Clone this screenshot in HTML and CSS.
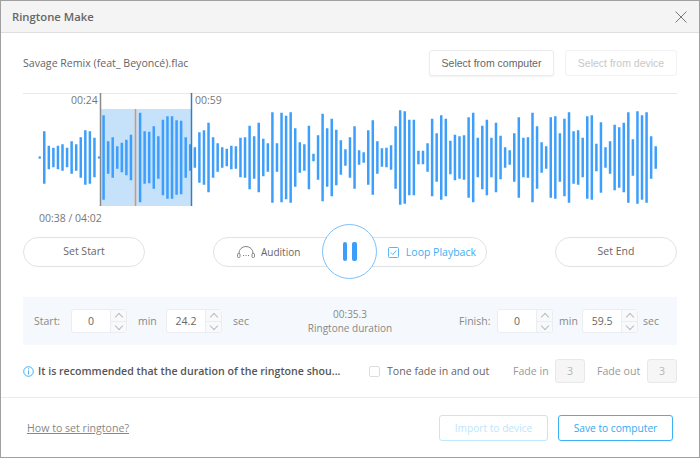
FILE: index.html
```html
<!DOCTYPE html>
<html lang="en">
<head>
<meta charset="utf-8">
<title>Ringtone Make</title>
<link rel="stylesheet" href="styles.css">
</head>
<body>
<div class="dialog">
  <header class="head">
    <span class="title">Ringtone Make</span>
    <svg class="close" width="12" height="12" viewBox="0 0 12 12"><path d="M.5.5l11 11M11.5.5l-11 11"/></svg>
  </header>
  <main class="main">
    <div class="file-row">
      <span class="file-name">Savage Remix (feat_ Beyoncé).flac</span>
      <div class="file-btns">
        <button class="btn">Select from computer</button>
        <button class="btn btn-off">Select from device</button>
      </div>
    </div>
    <section class="wave">
      <svg class="wave-svg" width="654" height="133" viewBox="23 92 654 133">
        <rect class="sel" x="101" y="108" width="91" height="97"/>
        <path class="bars" transform="translate(35.137 156.6)" d="m4.563 0v-.75v1.5v-.75m4.563 0v-26.25v52.5v-26.25m4.563 0v-11.75v23.5v-11.75m4.563 0v-9.75v19.5v-9.75m4.563 0v-11.75v23.5v-11.75m4.563 0v-13.25v26.5v-13.25m4.563 0v-9.75v19.5v-9.75m4.563 0v-16.25v32.5v-16.25m4.563 0v-13.25v26.5v-13.25m4.563 0v-20.25v40.5v-20.25m4.563 0v-27.25v54.5v-27.25m4.563 0v-26.25v52.5v-26.25m4.563 0v-19.75v39.5v-19.75m4.563 0v-.25v.5v-.25m4.563 0v-42.25v84.5v-42.25m4.563 0v-16.25v32.5v-16.25m4.563 0v-20.25v40.5v-20.25m4.563 0v-11.25v22.5v-11.25m4.563 0v-14.75v29.5v-14.75m4.563 0v-17.75v35.5v-17.75m4.563 0v-22.75v45.5v-22.75m4.563 0m4.563 0v-44.75v89.5v-44.75m4.563 0v-26.25v52.5v-26.25m4.563 0v-25.75v51.5v-25.75m4.563 0v-31.25v62.5v-31.25m4.563 0v-21.25v42.5v-21.25m4.563 0v-37.75v75.5v-37.75m4.563 0v-41.25v82.5v-41.25m4.563 0v-41.25v82.5v-41.25m4.563 0v-37.25v74.5v-37.25m4.563 0v-36.75v73.5v-36.75m4.563 0v-20.25v40.5v-20.25m4.563 0v-13.25v26.5v-13.25m4.563 0v-10.25v20.5v-10.25m4.563 0v-25.25v50.5v-25.25m4.563 0v-27.25v54.5v-27.25m4.563 0v-34.75v69.5v-34.75m4.563 0v-20.25v40.5v-20.25m4.563 0v-14.25v28.5v-14.25m4.563 0v-10.25v20.5v-10.25m4.563 0v-8.75v17.5v-8.75m4.563 0v-11.75v23.5v-11.75m4.563 0v-11.25v22.5v-11.25m4.563 0v-19.75v39.5v-19.75m4.563 0v-20.25v40.5v-20.25m4.563 0v-31.75v63.5v-31.75m4.563 0v-21.25v42.5v-21.25m4.563 0v-34.75v69.5v-34.75m4.563 0v-18.75v37.5v-18.75m4.563 0v-14.25v28.5v-14.25m4.563 0v-45.25v90.5v-45.25m4.563 0v-14.25v28.5v-14.25m4.563 0v-44.75v89.5v-44.75m4.563 0v-41.75v83.5v-41.75m4.563 0v-45.25v90.5v-45.25m4.563 0v-29.25v58.5v-29.25m4.563 0v-15.25v30.5v-15.25m4.563 0v-13.25v26.5v-13.25m4.563 0v-31.75v63.5v-31.75m4.563 0v-3.75v7.5v-3.75m4.563 0v-22.25v44.5v-22.25m4.563 0v-43.75v87.5v-43.75m4.563 0v-29.25v58.5v-29.25m4.563 0v-38.75v77.5v-38.75m4.563 0v-27.75v55.5v-27.75m4.563 0v-17.25v34.5v-17.25m4.563 0v-8.25v16.5v-8.25m4.563 0v-20.25v40.5v-20.25m4.563 0v-31.25v62.5v-31.25m4.563 0v-7.25v14.5v-7.25m4.563 0v-5.25v10.5v-5.25m4.563 0v-27.25v54.5v-27.25m4.563 0v-37.25v74.5v-37.25m4.563 0v-16.25v32.5v-16.25m4.563 0v-9.25v18.5v-9.25m4.563 0v-9.75v19.5v-9.75m4.563 0v-12.25v24.5v-12.25m4.563 0v-31.25v62.5v-31.25m4.563 0v-47.25v94.5v-47.25m4.563 0v-46.25v92.5v-46.25m4.563 0v-37.75v75.5v-37.75m4.563 0v-37.75v75.5v-37.75m4.563 0v-6.75v13.5v-6.75m4.563 0v-6.75v13.5v-6.75m4.563 0v-14.25v28.5v-14.25m4.563 0v-38.75v77.5v-38.75m4.563 0v-24.25v48.5v-24.25m4.563 0v-42.25v84.5v-42.25m4.563 0v-38.75v77.5v-38.75m4.563 0v-16.75v33.5v-16.75m4.563 0v-22.75v45.5v-22.75m4.563 0v-21.25v42.5v-21.25m4.563 0v-22.25v44.5v-22.25m4.563 0v-40.25v80.5v-40.25m4.563 0v-44.75v89.5v-44.75m4.563 0v-19.75v39.5v-19.75m4.563 0v-31.75v63.5v-31.75m4.563 0v-37.75v75.5v-37.75m4.563 0v-19.75v39.5v-19.75m4.563 0v-34.75v69.5v-34.75m4.563 0v-21.75v43.5v-21.75m4.563 0v-10.25v20.5v-10.25m4.563 0v-7.25v14.5v-7.25m4.563 0v-24.25v48.5v-24.25m4.563 0v-40.25v80.5v-40.25m4.563 0v-19.75v39.5v-19.75m4.563 0v-20.25v40.5v-20.25m4.563 0v-44.75v89.5v-44.75m4.563 0v-31.25v62.5v-31.25m4.563 0v-15.25v30.5v-15.25m4.563 0v-11.25v22.5v-11.25m4.563 0v-40.25v80.5v-40.25m4.563 0v-41.25v82.5v-41.25m4.563 0v-24.25v48.5v-24.25m4.563 0v-38.75v77.5v-38.75m4.563 0v-45.25v90.5v-45.25m4.563 0v-26.25v52.5v-26.25m4.563 0v-27.25v54.5v-27.25m4.563 0v-19.75v39.5v-19.75m4.563 0v-41.25v82.5v-41.25m4.563 0v-42.25v84.5v-42.25m4.563 0v-13.75v27.5v-13.75m4.563 0v-35.25v70.5v-35.25m4.563 0v-10.25v20.5v-10.25m4.563 0v-16.25v32.5v-16.25m4.563 0v-32.75v65.5v-32.75m4.563 0v-30.25v60.5v-30.25m4.563 0v-34.75v69.5v-34.75m4.563 0v-45.25v90.5v-45.25m4.563 0v-18.25v36.5v-18.25m4.563 0v-46.25v92.5v-46.25m4.563 0v-42.25v84.5v-42.25m4.563 0v-45.25v90.5v-45.25m4.563 0v-21.25v42.5v-21.25m4.563 0v-11.25v22.5v-11.25"/>
        <path class="mark-start" d="M100.500 91V205"/>
        <path class="tri-start" d="M97.500 89h6l-3 4z"/>
        <path class="mark-end" d="M191.500 91V205"/>
        <path class="tri-end" d="M188.500 89h6l-3 4z"/>
        <path class="mark-now" d="M135.500 108V205"/>
      </svg>
      <span class="time time-start">00:24</span>
      <span class="time time-end">00:59</span>
      <span class="time time-now">00:38 / 04:02</span>
    </section>
    <div class="controls">
      <button class="pill pill-side">Set Start</button>
      <div class="pill pill-mid">
        <span class="audition">
          <svg width="18" height="12" viewBox="0 0 18 12"><path class="ico-line" d="M2 8V7a7 6.500 0 0 1 14 0v1"/><rect class="ico-line" x=".5" y="7.500" width="2.500" height="4" rx="1"/><rect class="ico-line" x="15" y="7.500" width="2.500" height="4" rx="1"/><path class="ico-dots" d="M6 9.500h1M8.500 9.500h1M11 9.500h1"/></svg>
          Audition
        </span>
        <label class="loop">
          <svg width="11" height="11" viewBox="0 0 11 11"><rect class="chk-box" x=".5" y=".5" width="10" height="10" rx="1"/><path class="chk-tick" d="M2.800 5.500l2 2 3.500-4"/></svg>
          Loop Playback
        </label>
        <button class="play"><span class="pause-bar"></span><span class="pause-bar"></span></button>
      </div>
      <button class="pill pill-side">Set End</button>
    </div>
    <div class="panel">
      <div class="group">
        <span class="lab lab-start">Start:</span>
        <div class="num"><span class="val">0</span><span class="spin"><i class="up"></i><i class="down"></i></span></div>
        <span class="unit unit-min">min</span>
        <div class="num"><span class="val">24.2</span><span class="spin"><i class="up"></i><i class="down"></i></span></div>
        <span class="unit unit-sec">sec</span>
      </div>
      <div class="dur"><span>00:35.3</span><span>Ringtone duration</span></div>
      <div class="group group-end">
        <span class="lab lab-finish">Finish:</span>
        <div class="num"><span class="val">0</span><span class="spin"><i class="up"></i><i class="down"></i></span></div>
        <span class="unit unit-min2">min</span>
        <div class="num"><span class="val">59.5</span><span class="spin"><i class="up"></i><i class="down"></i></span></div>
        <span class="unit unit-sec2">sec</span>
      </div>
    </div>
    <div class="info-row">
      <svg class="info-ico" width="11" height="11" viewBox="0 0 11 11"><circle cx="5.500" cy="5.500" r="4.800"/><path d="M5.500 4.500v4M5.500 2.300v1.200"/></svg>
      <span class="info-text">It is recommended that the duration of the ringtone shou...</span>
      <span class="fade-chk"></span>
      <span class="fade-lab">Tone fade in and out</span>
      <span class="fade-in">Fade in</span>
      <span class="fade-val">3</span>
      <span class="fade-out">Fade out</span>
      <span class="fade-val">3</span>
    </div>
  </main>
  <footer class="foot">
    <a class="how" href="#">How to set ringtone?</a>
    <div class="foot-btns">
      <button class="cta cta-off">Import to device</button>
      <button class="cta">Save to computer</button>
    </div>
  </footer>
</div>
</body>
</html>
```
FILE: styles.css
```css
* { box-sizing: border-box; }
html, body { margin: 0; padding: 0; background: #fff; }
body { font-family: "Open Sans", "Liberation Sans", sans-serif; color: #666; }
button { font: inherit; background: #fff; cursor: pointer; padding: 0; }

.dialog { width: 700px; height: 458px; border: 1px solid #a0a0a0; display: flex; flex-direction: column; overflow: hidden; }
.head { height: 32px; flex: none; padding: 0 12px 0 11px; background: #f4f4f4; border-bottom: 1px solid #dedede; display: flex; align-items: center; justify-content: space-between; }
.title { font-size: 11.300px; font-weight: 600; color: #666; }
.close path { stroke: #777; stroke-width: 1; fill: none; }

.main { padding: 0 22px; flex: 1; }
.file-row { margin-top: 17px; height: 26px; display: flex; align-items: center; justify-content: space-between; }
.file-name { font-size: 10.600px; color: #666; margin-top: -1px; }
.file-btns { display: flex; gap: 11px; }
.btn { height: 26px; border: 1px solid #ececec; border-radius: 3px; font-family: "Liberation Sans", sans-serif; font-size: 10.500px; color: #666; width: 125px; box-shadow: 0 1px 2px rgba(0,0,0,.06); }
.btn-off { width: 112px; color: #c8c8c8; border-color: #f2f2f2; box-shadow: none; }

.wave { position: relative; margin-top: 17px; height: 133px; border-top: 1px solid #e9e9e9; }
.wave-svg { position: absolute; left: 0; top: -1px; display: block; }
.sel { fill: #c6e2fb; }
.bars { fill: none; stroke: #3d9ffb; stroke-width: 2.5; stroke-linecap: round; }
.mark-start { stroke: #8a8a8a; stroke-width: 1.500; fill: none; }
.tri-start { fill: #8a8a8a; }
.mark-end { stroke: #3b7cb8; stroke-width: 1.500; fill: none; }
.tri-end { fill: #3b7cb8; }
.mark-now { stroke: #e2925f; stroke-width: 1.500; fill: none; }
.time { position: absolute; font-size: 10.500px; color: #777; line-height: 14px; }
.time-start { left: 48px; top: -1px; }
.time-end { left: 172px; top: -1px; }
.time-now { left: 16px; top: 117px; }

.controls { margin-top: 11px; height: 30px; display: flex; justify-content: space-between; }
.pill { height: 30px; border: 1px solid #e2e2e2; border-radius: 15px; font-size: 10.500px; color: #666; padding-bottom: 2px; }
.pill-side { width: 122px; }
.pill-mid { position: relative; width: 274px; display: flex; align-items: center; justify-content: space-between; padding: 0 10px 0 23px; }
.audition { display: flex; align-items: center; gap: 6px; font-size: 10px; }
.ico-line { fill: none; stroke: #777; stroke-width: .9; }
.ico-dots { fill: none; stroke: #777; stroke-width: 1; }
.loop { display: flex; align-items: center; gap: 7px; color: #3ab0f5; }
.chk-box { fill: none; stroke: #5ab4f5; stroke-width: 1; }
.chk-tick { fill: none; stroke: #5ab4f5; stroke-width: 1; }
.play { position: absolute; left: 108px; top: -14px; width: 55px; height: 55px; border-radius: 50%; border: 1px solid #7fc0f8; background: #fff; display: flex; align-items: center; justify-content: center; gap: 5px; }
.pause-bar { width: 4.500px; height: 19px; border-radius: 2px; background: #3d9dfb; }

.panel { margin-top: 30px; height: 48px; background: #f5f9fd; display: grid; grid-template-columns: 1fr auto 1fr; align-items: center; padding: 0 18px 0 11px; font-size: 10.500px; }
.group { display: flex; align-items: center; }
.group-end { justify-self: end; }
.lab { color: #888; }
.lab-start { width: 37px; }
.lab-finish { width: 38px; }
.unit { color: #888; }
.unit-min { width: 39px; padding-left: 11px; }
.unit-min2 { width: 29px; padding-left: 6px; }
.unit-sec { padding-left: 11px; }
.unit-sec2 { padding-left: 5px; }
.num { width: 56px; height: 24px; display: flex; background: #fff; border: 1px solid #eaedf1; border-radius: 3px; }
.val { flex: 1; text-align: center; line-height: 22px; color: #666; }
.spin { width: 16px; display: flex; flex-direction: column; border-left: 1px solid #eaedf1; background: #f8f9fb; }
.spin i { flex: 1; position: relative; }
.up { border-bottom: 1px solid #eaedf1; }
.spin i::after { content: ""; position: absolute; left: 5px; width: 5px; height: 5px; border-left: 1px solid #bbb; border-top: 1px solid #bbb; }
.up::after { top: 4px; transform: rotate(45deg); }
.down::after { top: 1px; transform: rotate(225deg); }
.dur { display: flex; flex-direction: column; align-items: center; color: #888; font-size: 10px; line-height: 14px; margin-left: 7px; }

.info-row { margin-top: 14px; height: 24px; display: flex; align-items: center; font-size: 10.600px; }
.info-ico { flex: none; }
.info-ico circle, .info-ico path { fill: none; stroke: #45aef0; stroke-width: 1; }
.info-text { margin-left: 4px; width: 331px; font-weight: 600; color: #555; white-space: nowrap; }
.fade-chk { width: 11px; height: 11px; border: 1px solid #ddd; border-radius: 2px; background: #fff; }
.fade-lab { margin-left: 7px; width: 126px; color: #666; }
.fade-in, .fade-out { color: #999; }
.fade-in { width: 42px; }
.fade-out { width: 50px; margin-left: 12px; }
.fade-val { width: 30px; height: 24px; border: 1px solid #e8e8e8; border-radius: 3px; background: #f6f6f6; color: #b5b5b5; text-align: center; line-height: 22px; }

.foot { flex: none; height: 60px; border-top: 1px solid #ececec; padding: 17px 26px 0; display: flex; justify-content: space-between; }
.how { font-size: 10.600px; line-height: 26px; color: #888; }
.foot-btns { display: flex; gap: 10px; }
.cta { width: 115px; height: 26px; border: 1px solid #3ab2f5; border-radius: 3px; font-size: 10.200px; color: #35aaf2; }
.cta-off { width: 109px; border-color: #bfe8fb; color: #bde6fa; }
```
